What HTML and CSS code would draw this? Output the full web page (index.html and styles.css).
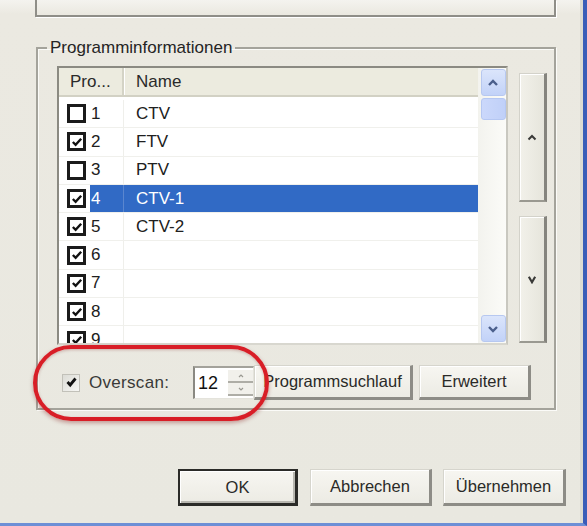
FILE: index.html
```html
<!DOCTYPE html>
<html>
<head>
<meta charset="utf-8">
<link rel="stylesheet" href="styles.css">
</head>
<body>
<div class="window">
  <div class="top-panel"></div>

  <fieldset class="group">
    <legend class="group-title">Programminformationen</legend>

    <div class="main">
      <div class="listview">
        <div class="table">
          <div class="header">
            <div class="hcell hcell-pro">Pro...</div>
            <div class="hcell hcell-name">Name</div>
          </div>
          <div class="rows">
            <div class="row"><span class="cb"></span><div class="sel"><span class="num">1</span><span class="name">CTV</span></div></div>
            <div class="row"><span class="cb checked"><svg viewBox="0 0 13 13"><path d="M2 6.5 L5 9.5 L11 3" /></svg></span><div class="sel"><span class="num">2</span><span class="name">FTV</span></div></div>
            <div class="row"><span class="cb"></span><div class="sel"><span class="num">3</span><span class="name">PTV</span></div></div>
            <div class="row selected"><span class="cb checked"><svg viewBox="0 0 13 13"><path d="M2 6.5 L5 9.5 L11 3" /></svg></span><div class="sel"><span class="num">4</span><span class="name">CTV-1</span></div></div>
            <div class="row"><span class="cb checked"><svg viewBox="0 0 13 13"><path d="M2 6.5 L5 9.5 L11 3" /></svg></span><div class="sel"><span class="num">5</span><span class="name">CTV-2</span></div></div>
            <div class="row"><span class="cb checked"><svg viewBox="0 0 13 13"><path d="M2 6.5 L5 9.5 L11 3" /></svg></span><div class="sel"><span class="num">6</span><span class="name"></span></div></div>
            <div class="row"><span class="cb checked"><svg viewBox="0 0 13 13"><path d="M2 6.5 L5 9.5 L11 3" /></svg></span><div class="sel"><span class="num">7</span><span class="name"></span></div></div>
            <div class="row"><span class="cb checked"><svg viewBox="0 0 13 13"><path d="M2 6.5 L5 9.5 L11 3" /></svg></span><div class="sel"><span class="num">8</span><span class="name"></span></div></div>
            <div class="row"><span class="cb checked"><svg viewBox="0 0 13 13"><path d="M2 6.5 L5 9.5 L11 3" /></svg></span><div class="sel"><span class="num">9</span><span class="name"></span></div></div>
          </div>
        </div>
        <div class="vscroll">
          <div class="sbtn"><svg viewBox="0 0 14 10"><path d="M3 7 L7 3 L11 7" /></svg></div>
          <div class="thumb"></div>
          <div class="track"></div>
          <div class="sbtn"><svg viewBox="0 0 14 10"><path d="M3 3 L7 7 L11 3" /></svg></div>
        </div>
      </div>

      <div class="side">
        <div class="side-btn side-up"><svg viewBox="0 0 12 8"><path d="M2.5 6 L6 2.5 L9.5 6" /></svg></div>
        <div class="side-btn side-down"><svg viewBox="0 0 12 10"><path d="M2.5 2 L6 8 L9.5 2" /></svg></div>
      </div>
    </div>

    <div class="controls">
      <label class="overscan">
        <span class="xpcb"><svg viewBox="0 0 13 13"><path d="M2.5 6 L5.2 9 L10.5 2.5" /></svg></span>
        <span class="overscan-text">Overscan:</span>
      </label>
      <div class="spinner">
        <span class="spin-value">12</span>
        <div class="spin-btns">
          <div class="spin-btn"><svg viewBox="0 0 8 4"><path d="M2 3 L4 1 L6 3" /></svg></div>
          <div class="spin-btn"><svg viewBox="0 0 8 4"><path d="M2 1 L4 3 L6 1" /></svg></div>
        </div>
      </div>
      <button class="btn btn-scan">Programmsuchlauf</button>
      <button class="btn btn-ext">Erweitert</button>
    </div>

    <div class="highlight"></div>
  </fieldset>

  <div class="footer">
    <button class="btn btn-footer btn-ok">OK</button>
    <button class="btn btn-footer btn-cancel">Abbrechen</button>
    <button class="btn btn-footer btn-apply">Übernehmen</button>
  </div>
</div>
</body>
</html>
```

FILE: styles.css
```css
* {
  box-sizing: border-box;
}

html, body {
  margin: 0;
  padding: 0;
}

body {
  width: 587px;
  height: 526px;
  overflow: hidden;
  background: #ebe9e1;
  font-family: "Liberation Sans", Arial, sans-serif;
  font-size: 17px;
  color: #202020;
}

.window {
  width: 587px;
  height: 526px;
  background: linear-gradient(180deg, #f4f3ef 0px, #ebe9e1 14px, #e9e8e0 100%);
  border-right: 4px solid #3a5cb8;
  border-bottom: 3px solid #6d8fd6;
  box-shadow: inset -3px 0 0 #dcdad2;
  display: flex;
  flex-direction: column;
}

.top-panel {
  margin-left: 35px;
  width: 521px;
  height: 17px;
  border: 2px solid #8f8e88;
  border-top: none;
  box-shadow: 1px 1px 0 #ffffff;
}

/* Group box */
.group {
  position: relative;
  margin: 21px 0 0 36px;
  width: 520px;
  padding: 0 0 8px 0;
  border: 2px solid #a4a39b;
  box-shadow: 1px 1px 0 #fbfbf8, inset 1px 1px 0 #fbfbf8;
  min-inline-size: 0;
}

.group-title {
  margin-left: 9px;
  padding: 0 3px;
  line-height: 20px;
  font-size: 17px;
  color: #252525;
}

.main {
  display: flex;
  margin: 8px 0 0 19px;
}

/* List view */
.listview {
  width: 451px;
  height: 279px;
  display: flex;
  border: 2px solid #8b8a82;
  border-right-color: #c9c8c0;
  border-bottom-color: #d8d7cf;
  background: #ffffff;
}

.table {
  flex: 1;
  display: flex;
  flex-direction: column;
  overflow: hidden;
}

.header {
  display: flex;
  height: 29px;
  flex-shrink: 0;
  background: #ecebdf;
  border-bottom: 2px solid #d2d1c4;
}

.hcell {
  display: flex;
  align-items: center;
  color: #2a2a2a;
}

.hcell-pro {
  width: 65px;
  padding-left: 11px;
  border-right: 2px solid #d4d3c6;
  box-shadow: 1px 0 0 #ffffff;
}

.hcell-name {
  flex: 1;
  padding-left: 12px;
}

.rows {
  padding-top: 3px;
}

.row {
  display: flex;
  align-items: stretch;
  height: 28.3px;
  border-bottom: 1px solid #f0f0ec;
}

.cb {
  flex-shrink: 0;
  align-self: center;
  width: 19px;
  height: 19px;
  margin: 0 4px 0 8px;
  border: 3px solid #1b1b1b;
  background: #ffffff;
  display: flex;
  align-items: center;
  justify-content: center;
}

.cb svg {
  width: 12px;
  height: 12px;
  fill: none;
  stroke: #111111;
  stroke-width: 2.6;
}

.sel {
  flex: 1;
  display: flex;
  align-items: center;
}

.num {
  width: 34px;
  height: 100%;
  display: flex;
  align-items: center;
  padding-left: 1px;
  border-right: 1px solid #efefeb;
}

.name {
  flex: 1;
  padding-left: 12px;
}

.row.selected .sel {
  background: #316ac5;
  color: #ffffff;
}

.row.selected .num {
  border-right-color: #5a86cf;
}

/* Scrollbar */
.vscroll {
  width: 28px;
  flex-shrink: 0;
  display: flex;
  flex-direction: column;
  align-items: center;
  padding: 1px 0 1px 2px;
  background: linear-gradient(90deg, #f3f3ee, #fbfbf8);
}

.sbtn {
  width: 25px;
  height: 27px;
  flex-shrink: 0;
  border-radius: 3px;
  background: linear-gradient(180deg, #dbe5fb, #c2d2f8);
  border: 1px solid #b7c8f0;
  display: flex;
  align-items: center;
  justify-content: center;
}

.sbtn svg {
  width: 14px;
  height: 10px;
  fill: none;
  stroke: #4b5f8c;
  stroke-width: 2.4;
}

.thumb {
  width: 25px;
  height: 22px;
  margin-top: 2px;
  flex-shrink: 0;
  border-radius: 3px;
  background: linear-gradient(90deg, #cbd8fb, #c0d0f8);
  border: 1px solid #b5c7f2;
}

.track {
  flex: 1;
}

/* Side buttons */
.side {
  margin-left: 11px;
  padding-top: 7px;
  display: flex;
  flex-direction: column;
  gap: 14px;
}

.side-btn {
  width: 28px;
  display: flex;
  align-items: center;
  justify-content: center;
  background: linear-gradient(90deg, #f2f1ea, #e6e5dc);
  border: 1px solid #d3d2ca;
  border-right: 3px solid #85847e;
  border-bottom: 2px solid #9a9991;
  box-shadow: inset 1px 1px 0 #ffffff;
}

.side-up {
  height: 129px;
}

.side-down {
  height: 127px;
}

.side-btn svg {
  width: 12px;
  height: 9px;
  fill: none;
  stroke: #3a3a38;
  stroke-width: 2;
}

.side-down svg {
  stroke-width: 2.4;
}

/* Bottom controls in group */
.controls {
  display: flex;
  align-items: center;
  margin-top: 20px;
  height: 35px;
}

.overscan {
  width: 155px;
  display: flex;
  align-items: center;
  padding-left: 24px;
  gap: 9px;
}

.xpcb {
  width: 18px;
  height: 18px;
  background: linear-gradient(135deg, #dcdcd6, #f7f7f4);
  border: 1px solid #c2c1b9;
  display: flex;
  align-items: center;
  justify-content: center;
}

.xpcb svg {
  width: 13px;
  height: 13px;
  fill: none;
  stroke: #121212;
  stroke-width: 2.8;
}

.overscan-text {
  color: #3a3a38;
  letter-spacing: 0.3px;
}

.spinner {
  width: 61px;
  height: 33px;
  display: flex;
  align-items: stretch;
  background: #ffffff;
  border-left: 2px solid #8a8982;
  border-top: 2px solid #a3a29b;
  border-right: 1px solid #e4e3dc;
  border-bottom: 1px solid #e4e3dc;
}

.spin-value {
  flex: 1;
  display: flex;
  align-items: center;
  padding-left: 3px;
  font-size: 18px;
  color: #111111;
}

.spin-btns {
  width: 25px;
  display: flex;
  flex-direction: column;
  padding: 2px 0;
}

.spin-btn {
  flex: 1;
  display: flex;
  align-items: center;
  justify-content: center;
  border-bottom: 2px solid #aeada6;
  background: #f1f0eb;
}

.spin-btn svg {
  width: 8px;
  height: 4px;
  fill: none;
  stroke: #9a9992;
  stroke-width: 1.2;
}

.btn {
  font-family: "Liberation Sans", Arial, sans-serif;
  font-size: 16.5px;
  color: #2a2a28;
  padding: 0;
  background: linear-gradient(180deg, #f7f6f1, #ecebe4);
  border: 1px solid #d6d5cd;
  border-right: 3px solid #8d8c86;
  border-bottom: 3px solid #8d8c86;
  box-shadow: inset 1px 1px 0 #ffffff;
}

.btn-scan {
  margin-left: 0;
  width: 159px;
  height: 35px;
}

.btn-ext {
  margin-left: 6px;
  width: 112px;
  height: 35px;
}

/* Annotation ellipse */
.highlight {
  position: absolute;
  left: -5px;
  top: 287px;
  width: 236px;
  height: 76px;
  border: 4px solid #d81e27;
  border-radius: 38px;
  box-shadow: 0 2px 4px rgba(120, 0, 0, 0.35), inset 0 1px 3px rgba(120, 0, 0, 0.25);
  pointer-events: none;
}

/* Footer */
.footer {
  display: flex;
  justify-content: flex-end;
  padding-right: 17px;
  margin-top: 59px;
}

.btn-footer {
  height: 37px;
}

.btn-ok {
  width: 120px;
  border: 2px solid #2b2b28;
  border-right-width: 3px;
  border-bottom-width: 3px;
  box-shadow: inset 1px 1px 0 #ffffff, inset -2px -2px 0 #b8b7b0;
}

.btn-cancel {
  width: 122px;
  margin-left: 12px;
}

.btn-apply {
  width: 123px;
  margin-left: 11px;
}
```
